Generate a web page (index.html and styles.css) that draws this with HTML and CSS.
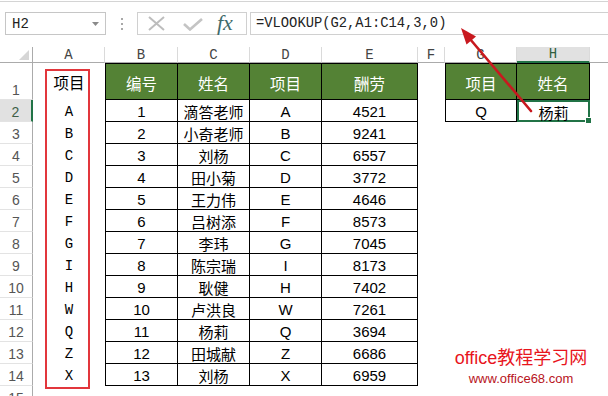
FILE: index.html
```html
<!DOCTYPE html>
<html lang="zh-CN">
<head>
<meta charset="utf-8">
<title>VLOOKUP</title>
<link rel="stylesheet" href="styles.css">
</head>
<body>
<div class="page">
  <div class="ribbon-edge"></div>
  <div class="fbar">
    <div class="namebox">
      <span class="name">H2</span>
      <svg class="dd" width="7" height="4" viewBox="0 0 7 4"><polygon points="0,0 7,0 3.5,4" fill="#8a8a8a"/></svg>
    </div>
    <div class="dots"><i></i><i></i><i></i></div>
    <div class="fxbox">
      <svg class="ic-x" width="17" height="15" viewBox="0 0 17 15"><path d="M1 1 L16 14 M16 1 L1 14" stroke="#bdbdbd" stroke-width="2" fill="none"/></svg>
      <svg class="ic-ok" width="20" height="13" viewBox="0 0 20 13"><path d="M1 6 L7 11.5 L19 1" stroke="#c4c4c4" stroke-width="2.6" fill="none"/></svg>
      <span class="fx">fx</span>
    </div>
    <div class="formula">=VLOOKUP(G2,A1:C14,3,0)</div>
  </div>

  <div class="sheet">
    <!-- column headers -->
    <div class="corner"><svg width="10" height="10" viewBox="0 0 10 10"><polygon points="10,0 10,10 0,10" fill="#d6d6d6"/></svg></div>
    <div class="ch">A</div><div class="ch">B</div><div class="ch">C</div><div class="ch">D</div><div class="ch">E</div><div class="ch">F</div><div class="ch">G</div><div class="ch sel">H</div><div class="ch last"></div>

    <!-- row 1 -->
    <div class="rh">1</div>
    <div class="cell cn">项目</div>
    <div class="cell t tl tt hd">编号</div><div class="cell t tt hd">姓名</div><div class="cell t tt hd">项目</div><div class="cell t tt hd">酬劳</div>
    <div class="cell"></div>
    <div class="cell t tl tt hd">项目</div><div class="cell t tt hd">姓名</div>
    <div class="cell"></div>

    <!-- row 2 -->
    <div class="rh sel">2</div>
    <div class="cell mono">A</div>
    <div class="cell t tl">1</div><div class="cell t">滴答老师</div><div class="cell t">A</div><div class="cell t">4521</div>
    <div class="cell"></div>
    <div class="cell t tl">Q</div><div class="cell active">杨莉<span class="handle"></span></div>
    <div class="cell"></div>

    <div class="rh">3</div>
    <div class="cell mono">B</div>
    <div class="cell t tl">2</div><div class="cell t">小奇老师</div><div class="cell t">B</div><div class="cell t">9241</div>
    <div class="cell"></div><div class="cell"></div><div class="cell"></div><div class="cell"></div>

    <div class="rh">4</div>
    <div class="cell mono">C</div>
    <div class="cell t tl">3</div><div class="cell t">刘杨</div><div class="cell t">C</div><div class="cell t">6557</div>
    <div class="cell"></div><div class="cell"></div><div class="cell"></div><div class="cell"></div>

    <div class="rh">5</div>
    <div class="cell mono">D</div>
    <div class="cell t tl">4</div><div class="cell t">田小菊</div><div class="cell t">D</div><div class="cell t">3772</div>
    <div class="cell"></div><div class="cell"></div><div class="cell"></div><div class="cell"></div>

    <div class="rh">6</div>
    <div class="cell mono">E</div>
    <div class="cell t tl">5</div><div class="cell t">王力伟</div><div class="cell t">E</div><div class="cell t">4646</div>
    <div class="cell"></div><div class="cell"></div><div class="cell"></div><div class="cell"></div>

    <div class="rh">7</div>
    <div class="cell mono">F</div>
    <div class="cell t tl">6</div><div class="cell t">吕树添</div><div class="cell t">F</div><div class="cell t">8573</div>
    <div class="cell"></div><div class="cell"></div><div class="cell"></div><div class="cell"></div>

    <div class="rh">8</div>
    <div class="cell mono">G</div>
    <div class="cell t tl">7</div><div class="cell t">李玮</div><div class="cell t">G</div><div class="cell t">7045</div>
    <div class="cell"></div><div class="cell"></div><div class="cell"></div><div class="cell"></div>

    <div class="rh">9</div>
    <div class="cell mono">I</div>
    <div class="cell t tl">8</div><div class="cell t">陈宗瑞</div><div class="cell t">I</div><div class="cell t">8173</div>
    <div class="cell"></div><div class="cell"></div><div class="cell"></div><div class="cell"></div>

    <div class="rh">10</div>
    <div class="cell mono">H</div>
    <div class="cell t tl">9</div><div class="cell t">耿健</div><div class="cell t">H</div><div class="cell t">7402</div>
    <div class="cell"></div><div class="cell"></div><div class="cell"></div><div class="cell"></div>

    <div class="rh">11</div>
    <div class="cell mono">W</div>
    <div class="cell t tl">10</div><div class="cell t">卢洪良</div><div class="cell t">W</div><div class="cell t">7261</div>
    <div class="cell"></div><div class="cell"></div><div class="cell"></div><div class="cell"></div>

    <div class="rh">12</div>
    <div class="cell mono">Q</div>
    <div class="cell t tl">11</div><div class="cell t">杨莉</div><div class="cell t">Q</div><div class="cell t">3694</div>
    <div class="cell"></div><div class="cell"></div><div class="cell"></div><div class="cell"></div>

    <div class="rh">13</div>
    <div class="cell mono">Z</div>
    <div class="cell t tl">12</div><div class="cell t">田城献</div><div class="cell t">Z</div><div class="cell t">6686</div>
    <div class="cell"></div><div class="cell"></div><div class="cell"></div><div class="cell"></div>

    <div class="rh">14</div>
    <div class="cell mono">X</div>
    <div class="cell t tl">13</div><div class="cell t">刘杨</div><div class="cell t">X</div><div class="cell t">6959</div>
    <div class="cell"></div><div class="cell"></div><div class="cell"></div><div class="cell"></div>

    <div class="rh">15</div>
    <div class="cell"></div><div class="cell"></div><div class="cell"></div><div class="cell"></div><div class="cell"></div><div class="cell"></div><div class="cell"></div><div class="cell"></div><div class="cell"></div>

    <div class="redbox"></div>
  </div>

  <svg class="arrow" width="608" height="396" viewBox="0 0 608 396">
    <line x1="531" y1="111" x2="470" y2="39" stroke="#c8191f" stroke-width="2.6" stroke-linecap="round"/>
    <polygon points="461,28 466.5,44.5 476,36.5" fill="#c8191f"/>
  </svg>

  <div class="wm">
    <div class="wm-title">office教程学习网</div>
    <div class="wm-url">www.office68.com</div>
  </div>
</div>
</body>
</html>
```

FILE: styles.css
```css
* { box-sizing: border-box; }

html, body {
  margin: 0;
  padding: 0;
  background: #fff;
}

body {
  width: 608px;
  height: 396px;
  overflow: hidden;
  font-family: "Liberation Sans", "Noto Sans CJK SC", sans-serif;
}

.page {
  position: relative;
  width: 608px;
  height: 396px;
  overflow: hidden;
}

.ribbon-edge {
  margin-top: 1px;
  height: 1px;
  background: #d4d4d4;
}

/* formula bar */
.fbar {
  display: flex;
  align-items: center;
  margin-top: 10px;
  height: 23px;
}

.namebox {
  margin-left: 5px;
  width: 101px;
  height: 23px;
  border: 1px solid #c6c6c6;
  display: flex;
  align-items: center;
  justify-content: space-between;
  padding: 0 6px 0 6px;
}

.name {
  font-family: "Liberation Mono", monospace;
  font-size: 14px;
  color: #222;
}

.dots {
  margin-left: 15px;
  width: 3px;
  display: flex;
  flex-direction: column;
  gap: 3px;
}

.dots i {
  display: block;
  width: 2px;
  height: 2px;
  background: #a8a8a8;
}

.fxbox {
  margin-left: 13px;
  width: 110px;
  height: 23px;
  border: 1px solid #d0d0d0;
  display: flex;
  align-items: center;
  padding-left: 10px;
}

.ic-x { margin-left: 0; }
.ic-ok { margin-left: 18px; margin-top: 2px; }

.fx {
  margin-left: 14px;
  font-family: "Liberation Serif", serif;
  font-style: italic;
  font-size: 22px;
  line-height: 1;
  color: #3e6b6b;
  margin-top: -2px;
}

.formula {
  margin-left: 3px;
  flex: 1;
  height: 23px;
  border: 1px solid #d0d0d0;
  border-right: none;
  padding-left: 5px;
  display: flex;
  align-items: center;
  font-family: "Liberation Mono", monospace;
  font-size: 13.8px;
  color: #222;
}

/* sheet grid */
.sheet {
  position: relative;
  margin-top: 12px;
  display: grid;
  grid-template-columns: 33px 72px 73px 72px 72px 96px 27px 72px 73px 1fr;
  grid-template-rows: 16px 37px repeat(14, 22px);
}

.corner {
  border-right: 1px solid #ababab;
  border-bottom: 1px solid #ababab;
  display: flex;
  align-items: flex-end;
  justify-content: flex-end;
  padding: 0 3px 2px 0;
}

.ch {
  border-right: 1px solid #dadada;
  border-bottom: 1px solid #ababab;
  display: flex;
  align-items: center;
  justify-content: center;
  font-family: "Liberation Mono", monospace;
  font-size: 14px;
  color: #444;
}

.ch.last { border-right: none; }

.ch.sel {
  background: #e1e1e1;
  border-bottom: 2px solid #217346;
  color: #2f5f3f;
}

.rh {
  border-right: 1px solid #ababab;
  border-bottom: 1px solid #e3e3e3;
  display: flex;
  align-items: flex-end;
  justify-content: center;
  padding-bottom: 1px;
  font-size: 14px;
  color: #555;
}

.rh.sel {
  background: #e1e1e1;
  border-right: 2px solid #217346;
  color: #3f5f48;
}

.cell {
  display: flex;
  align-items: center;
  justify-content: center;
  padding-top: 2px;
  font-size: 15px;
  color: #000;
}

.cn {
  font-size: 15.5px;
  padding-top: 0;
}

.mono {
  font-family: "Liberation Mono", monospace;
  font-size: 14px;
}

.t {
  border-right: 1px solid #000;
  border-bottom: 1px solid #000;
}

.tl { border-left: 1px solid #000; }
.tt { border-top: 1px solid #000; }

.hd {
  background: #548235;
  color: #fff;
  font-size: 15.5px;
}

.active {
  position: relative;
  z-index: 2;
  border: 2px solid #217346;
}

.handle {
  position: absolute;
  right: -4px;
  bottom: -4px;
  width: 7px;
  height: 7px;
  background: #217346;
  border: 1px solid #fff;
}

.redbox {
  position: absolute;
  left: 45px;
  top: 22px;
  width: 45px;
  height: 320px;
  border: 2px solid #e2363c;
  pointer-events: none;
}

.arrow {
  position: absolute;
  left: 0;
  top: 0;
  pointer-events: none;
  z-index: 5;
}

.wm {
  position: absolute;
  left: 451px;
  top: 347px;
  width: 140px;
  display: flex;
  flex-direction: column;
  align-items: center;
}

.wm-title {
  font-size: 18px;
  line-height: 22px;
  color: #e8141c;
  white-space: nowrap;
}

.wm-url {
  margin-top: 2px;
  font-size: 13px;
  line-height: 16px;
  color: #b8141c;
  white-space: nowrap;
}
```
